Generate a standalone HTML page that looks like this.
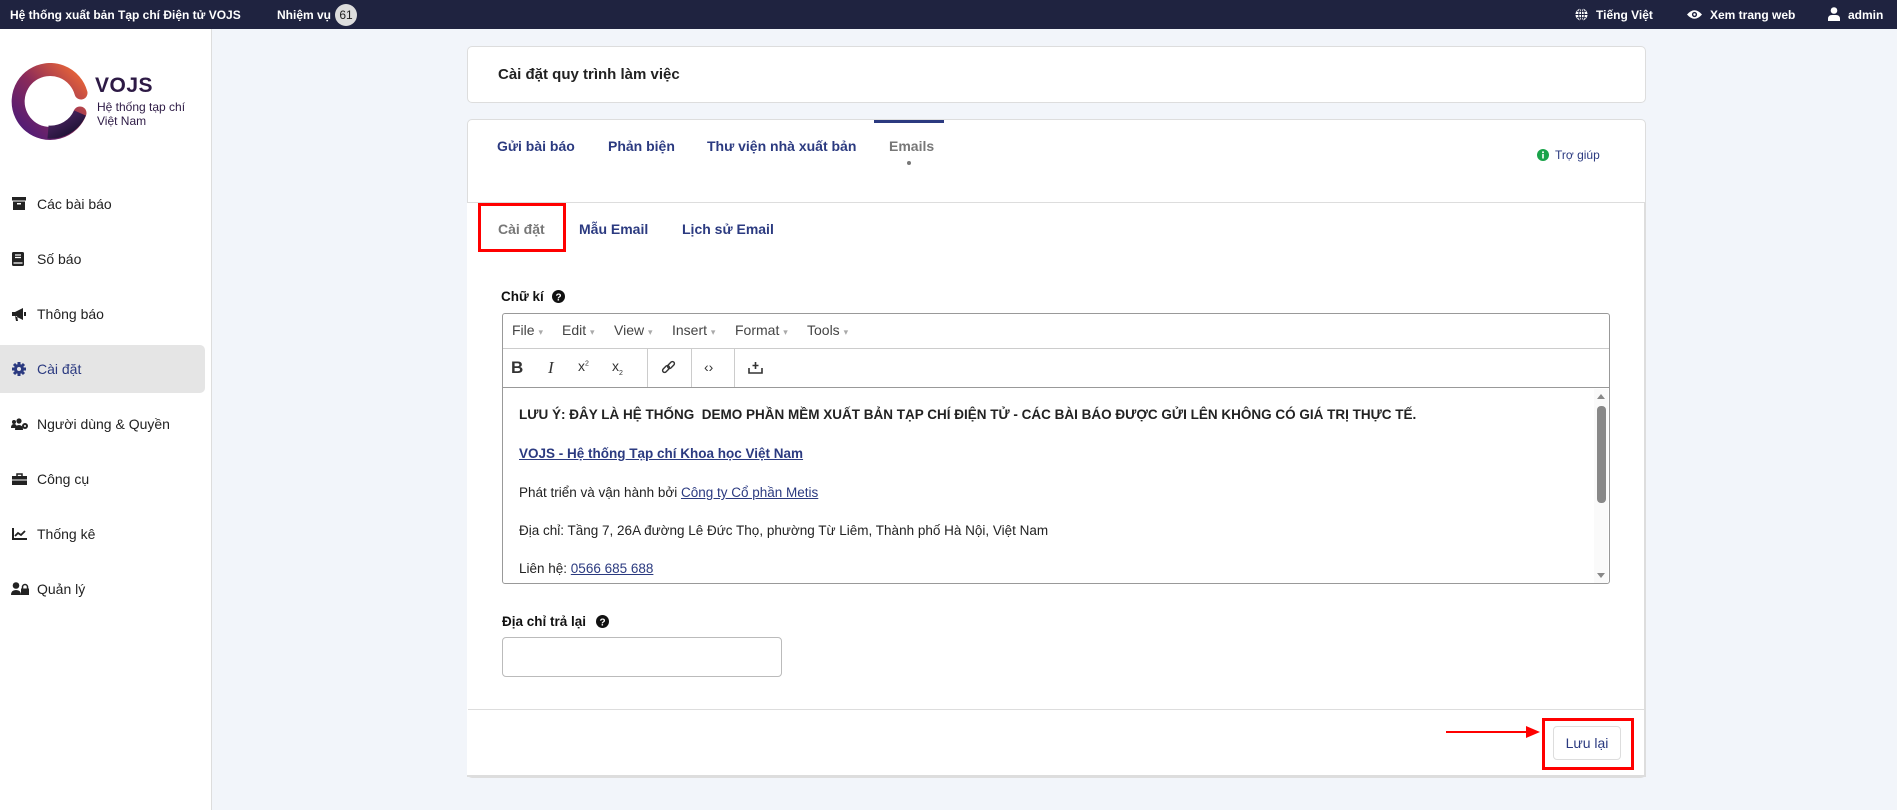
<!DOCTYPE html>
<html><head><meta charset="utf-8"><style>
*{box-sizing:border-box;margin:0;padding:0}
body{width:1897px;height:810px;overflow:hidden;background:#f2f5fa;font-family:"Liberation Sans","Noto Sans CJK SC",sans-serif;position:relative;color:#222}
.a{position:absolute;white-space:nowrap}
.top{left:0;top:0;width:1897px;height:29px;background:#1f2340;color:#fff;font-size:12px;font-weight:bold}
.side{left:0;top:29px;width:212px;height:781px;background:#fff;border-right:1px solid #ddd}
.nav{font-size:14px;color:#222;left:37px}
.tab{font-size:14px;font-weight:bold;color:#2b3a80}
.ed{font-size:13.5px;color:#222}
.lnk{color:#2b3a80;text-decoration:underline}
.tb{font-size:14px;color:#444}
</style></head><body>
<div class="a top">
 <span class="a" style="left:10px;top:8px">Hệ thống xuất bản Tạp chí Điện tử VOJS</span>
 <span class="a" style="left:277px;top:8px">Nhiệm vụ</span>
 <span class="a" style="left:335px;top:4px;width:22px;height:22px;border-radius:11px;background:#ddd;color:#222;text-align:center;line-height:22px;font-weight:normal">61</span>
 <svg class="a" style="left:1575px;top:8px" width="13" height="13" viewBox="0 0 14 14"><circle cx="7" cy="7" r="6.5" fill="#fff"/><path d="M0.5 7h13M7 .5v13M2 3.5h10M2 10.5h10" stroke="#1f2340" stroke-width="1"/><ellipse cx="7" cy="7" rx="3" ry="6.5" fill="none" stroke="#1f2340" stroke-width="1"/></svg>
 <span class="a" style="left:1596px;top:8px">Tiếng Việt</span>
 <svg class="a" style="left:1687px;top:9px" width="15" height="11" viewBox="0 0 15 11"><path d="M0 5.5Q7.5-3 15 5.5Q7.5 14 0 5.5z" fill="#fff"/><circle cx="7.5" cy="5.5" r="2.6" fill="#1f2340"/><circle cx="7.5" cy="5.5" r="1.2" fill="#fff"/></svg>
 <span class="a" style="left:1710px;top:8px">Xem trang web</span>
 <svg class="a" style="left:1828px;top:7px" width="12" height="14" viewBox="0 0 12 14"><circle cx="6" cy="3.5" r="3.3" fill="#fff"/><path d="M0 14v-2q0-4 4-4h4q4 0 4 4v2z" fill="#fff"/></svg>
 <span class="a" style="left:1848px;top:8px">admin</span>
</div>
<div class="a side"></div>
<svg class="a" style="left:8px;top:63px" width="80" height="78" viewBox="0 0 80 78"><defs><linearGradient id="g" x1="1" y1="0" x2="0" y2="1"><stop offset="0" stop-color="#f06a35"/><stop offset=".5" stop-color="#8a2a5a"/><stop offset="1" stop-color="#4a1a7a"/></linearGradient><linearGradient id="g2" x1="0" y1="0" x2="1" y2="1"><stop offset="0" stop-color="#5a2a70"/><stop offset="1" stop-color="#1a1030"/></linearGradient></defs><path d="M73 30A32 32 0 1 0 72 50" fill="none" stroke="url(#g)" stroke-width="13" stroke-linecap="round"/><path d="M72 50A32 32 0 0 1 40 69" fill="none" stroke="url(#g2)" stroke-width="13"/></svg>
<span class="a" style="left:95px;top:74px;font-size:21px;color:#2d1a45;font-weight:bold;letter-spacing:.5px">VOJS</span>
<span class="a" style="left:97px;top:100px;font-size:12px;color:#2d1a45;line-height:14px">Hệ thống tạp chí<br>Việt Nam</span>
<div class="a" style="left:0;top:345px;width:205px;height:48px;background:#e5e5e5;border-radius:0 5px 5px 0"></div>
<svg class="a" style="left:12px;top:197px" width="14" height="13" viewBox="0 0 14 13"><rect x="0" y="0" width="14" height="3.5" fill="#222"/><rect x="1" y="4.5" width="12" height="8.5" fill="#222"/><rect x="5" y="6" width="4" height="1.5" fill="#fff"/></svg>
<span class="a nav" style="top:196px">Các bài báo</span>
<svg class="a" style="left:12px;top:252px" width="12" height="14" viewBox="0 0 12 14"><rect x="0" y="0" width="12" height="14" rx="1.5" fill="#222"/><path d="M3 3h6M3 5.5h6M1.5 11h9" stroke="#fff" stroke-width="1.2"/></svg>
<span class="a nav" style="top:251px">Số báo</span>
<svg class="a" style="left:12px;top:308px" width="14" height="13" viewBox="0 0 14 13"><path d="M0 4h3l8-4v12l-8-4H0z M3 8l1 5h2l-1-5z" fill="#222"/><rect x="12" y="4" width="2" height="4" fill="#222"/></svg>
<span class="a nav" style="top:306px">Thông báo</span>
<svg class="a" style="left:12px;top:362px" width="14" height="14" viewBox="0 0 14 14"><circle cx="7" cy="7" r="5" fill="#2b3a80"/><path d="M7 0v14M0 7h14M2 2l10 10M12 2L2 12" stroke="#2b3a80" stroke-width="3"/><circle cx="7" cy="7" r="2" fill="#e5e5e5"/></svg>
<span class="a nav" style="top:361px;color:#2b3a80">Cài đặt</span>
<svg class="a" style="left:11px;top:418px" width="18" height="12" viewBox="0 0 18 12"><circle cx="3" cy="4" r="2" fill="#222"/><circle cx="8" cy="3" r="2.6" fill="#222"/><path d="M0 10q0-4 3-4t3 4zM4 12q0-5 4-5t4 5z" fill="#222"/><circle cx="14" cy="8" r="3" fill="#222"/><circle cx="14" cy="8" r="1" fill="#fff"/></svg>
<span class="a nav" style="top:416px">Người dùng &amp; Quyền</span>
<svg class="a" style="left:12px;top:473px" width="15" height="12" viewBox="0 0 15 12"><path d="M5 3V1h5v2" stroke="#222" stroke-width="1.5" fill="none"/><rect x="0" y="3" width="15" height="9" fill="#222"/><rect x="0" y="6.5" width="15" height="1" fill="#fff"/></svg>
<span class="a nav" style="top:471px">Công cụ</span>
<svg class="a" style="left:12px;top:528px" width="15" height="12" viewBox="0 0 15 12"><path d="M1 0v11h14" stroke="#222" stroke-width="2" fill="none"/><path d="M3 8l3-3 3 2 4-4" stroke="#222" stroke-width="1.8" fill="none"/></svg>
<span class="a nav" style="top:526px">Thống kê</span>
<svg class="a" style="left:11px;top:582px" width="18" height="13" viewBox="0 0 18 13"><circle cx="5" cy="3.5" r="3.3" fill="#222"/><path d="M0 13q0-5 5-5t5 5z" fill="#222"/><rect x="10" y="6.5" width="8" height="6.5" fill="#222"/><path d="M11.5 7V5a2.5 2.5 0 0 1 5 0v2" stroke="#222" stroke-width="1.5" fill="none"/></svg>
<span class="a nav" style="top:581px">Quản lý</span>

<div class="a" style="left:467px;top:46px;width:1179px;height:57px;background:#fff;border:1px solid #ddd;border-radius:5px"></div>
<span class="a" style="left:498px;top:66px;font-size:15px;font-weight:bold;color:#222">Cài đặt quy trình làm việc</span>

<div class="a" style="left:467px;top:119px;width:1179px;height:659px;background:#fff;border:1px solid #ddd;border-radius:5px"></div>
<div class="a" style="left:467px;top:202px;width:1179px;height:575px;background:#fff;border-top:1px solid #ddd;border-right:2px solid #ddd;border-bottom:2px solid #ddd"></div>
<div class="a" style="left:874px;top:120px;width:70px;height:3px;background:#2b3a80"></div>
<span class="a tab" style="left:497px;top:138px">Gửi bài báo</span>
<span class="a tab" style="left:608px;top:138px">Phản biện</span>
<span class="a tab" style="left:707px;top:138px">Thư viện nhà xuất bản</span>
<span class="a tab" style="left:889px;top:138px;color:#777">Emails</span>
<div class="a" style="left:907px;top:161px;width:4px;height:4px;border-radius:2px;background:#777"></div>
<svg class="a" style="left:1537px;top:149px" width="12" height="12" viewBox="0 0 12 12"><circle cx="6" cy="6" r="6" fill="#1aa34a"/><rect x="5.2" y="5" width="1.6" height="4.5" fill="#fff"/><circle cx="6" cy="3.3" r="1" fill="#fff"/></svg>
<span class="a" style="left:1555px;top:148px;font-size:12px;color:#2b3a80">Trợ giúp</span>

<div class="a" style="left:478px;top:203px;width:88px;height:49px;border:3px solid #f00"></div>
<span class="a tab" style="left:498px;top:221px;color:#777">Cài đặt</span>
<span class="a tab" style="left:579px;top:221px">Mẫu Email</span>
<span class="a tab" style="left:682px;top:221px">Lịch sử Email</span>

<span class="a" style="left:501px;top:289px;font-size:13.5px;font-weight:bold;color:#111">Chữ kí</span>
<svg class="a" style="left:552px;top:290px" width="13" height="13" viewBox="0 0 13 13"><circle cx="6.5" cy="6.5" r="6.5" fill="#111"/><text x="6.5" y="10.3" font-size="10" font-weight="bold" fill="#fff" text-anchor="middle" font-family="Liberation Sans">?</text></svg>

<div class="a" style="left:502px;top:313px;width:1108px;height:271px;border:1px solid #999;border-radius:3px;background:#fff"></div>
<div class="a" style="left:503px;top:348px;width:1106px;height:1px;background:#ccc"></div>
<div class="a" style="left:503px;top:387px;width:1106px;height:1px;background:#999"></div>
<span class="a tb" style="left:512px;top:322px">File <span style="color:#aaa;font-size:9px">▾</span></span>
<span class="a tb" style="left:562px;top:322px">Edit <span style="color:#aaa;font-size:9px">▾</span></span>
<span class="a tb" style="left:614px;top:322px">View <span style="color:#aaa;font-size:9px">▾</span></span>
<span class="a tb" style="left:672px;top:322px">Insert <span style="color:#aaa;font-size:9px">▾</span></span>
<span class="a tb" style="left:735px;top:322px">Format <span style="color:#aaa;font-size:9px">▾</span></span>
<span class="a tb" style="left:807px;top:322px">Tools <span style="color:#aaa;font-size:9px">▾</span></span>
<span class="a" style="left:511px;top:358px;font-size:17px;font-weight:bold;color:#333">B</span>
<span class="a" style="left:548px;top:358px;font-size:17px;font-style:italic;font-family:'Liberation Serif',serif;color:#333">I</span>
<span class="a" style="left:578px;top:358px;font-size:14px;color:#333">x<sup style="font-size:7px">2</sup></span>
<span class="a" style="left:612px;top:358px;font-size:14px;color:#333">x<sub style="font-size:7px">2</sub></span>
<div class="a" style="left:647px;top:349px;width:1px;height:38px;background:#ccc"></div>
<div class="a" style="left:691px;top:349px;width:1px;height:38px;background:#ccc"></div>
<div class="a" style="left:734px;top:349px;width:1px;height:38px;background:#ccc"></div>
<svg class="a" style="left:661px;top:360px" width="15" height="15" viewBox="0 0 15 15"><g fill="none" stroke="#333" stroke-width="1.4"><rect x="1" y="7" width="8" height="4" rx="2" transform="rotate(-45 5 9)"/><rect x="6" y="3" width="8" height="4" rx="2" transform="rotate(-45 10 5)"/></g></svg>
<span class="a" style="left:704px;top:359px;font-size:14px;color:#333">‹›</span>
<svg class="a" style="left:748px;top:361px" width="15" height="13" viewBox="0 0 15 13"><path d="M7.5 1v7M4.5 4.5h6M1 7v5h13V7" fill="none" stroke="#333" stroke-width="1.6"/></svg>

<div class="a ed" style="left:519px;top:407px;font-weight:bold">LƯU Ý: ĐÂY LÀ HỆ THỐNG&nbsp; DEMO PHẦN MỀM XUẤT BẢN TẠP CHÍ ĐIỆN TỬ - CÁC BÀI BÁO ĐƯỢC GỬI LÊN KHÔNG CÓ GIÁ TRỊ THỰC TẾ.</div>
<div class="a ed lnk" style="left:519px;top:446px;font-weight:bold">VOJS - Hệ thống Tạp chí Khoa học Việt Nam</div>
<div class="a ed" style="left:519px;top:485px">Phát triển và vận hành bởi <span class="lnk">Công ty Cổ phần Metis</span></div>
<div class="a ed" style="left:519px;top:523px">Địa chỉ: Tầng 7, 26A đường Lê Đức Thọ, phường Từ Liêm, Thành phố Hà Nội, Việt Nam</div>
<div class="a ed" style="left:519px;top:561px">Liên hệ: <span class="lnk">0566 685 688</span></div>
<div class="a" style="left:1594px;top:389px;width:14px;height:194px;background:#fafafa"></div>
<div class="a" style="left:1597px;top:406px;width:9px;height:97px;border-radius:4px;background:#888"></div>
<div class="a" style="left:1597px;top:394px;width:0;height:0;border-left:4px solid transparent;border-right:4px solid transparent;border-bottom:5px solid #888"></div>
<div class="a" style="left:1597px;top:573px;width:0;height:0;border-left:4px solid transparent;border-right:4px solid transparent;border-top:5px solid #888"></div>

<span class="a" style="left:502px;top:614px;font-size:13.5px;font-weight:bold;color:#111">Địa chỉ trả lại</span>
<svg class="a" style="left:596px;top:615px" width="13" height="13" viewBox="0 0 13 13"><circle cx="6.5" cy="6.5" r="6.5" fill="#111"/><text x="6.5" y="10.3" font-size="10" font-weight="bold" fill="#fff" text-anchor="middle" font-family="Liberation Sans">?</text></svg>
<div class="a" style="left:502px;top:637px;width:280px;height:40px;border:1px solid #bbb;border-radius:4px;background:#fff"></div>

<div class="a" style="left:468px;top:709px;width:1177px;height:1px;background:#ddd"></div>
<div class="a" style="left:1446px;top:731px;width:82px;height:2px;background:#f00"></div>
<div class="a" style="left:1526px;top:726px;width:0;height:0;border-top:6px solid transparent;border-bottom:6px solid transparent;border-left:14px solid #f00"></div>
<div class="a" style="left:1542px;top:718px;width:92px;height:52px;border:3px solid #f00"></div>
<div class="a" style="left:1553px;top:726px;width:68px;height:34px;border:1px solid #ddd;border-radius:4px;background:#fff;font-size:14px;color:#2b3a80;text-align:center;line-height:32px">Lưu lại</div>
</body></html>
